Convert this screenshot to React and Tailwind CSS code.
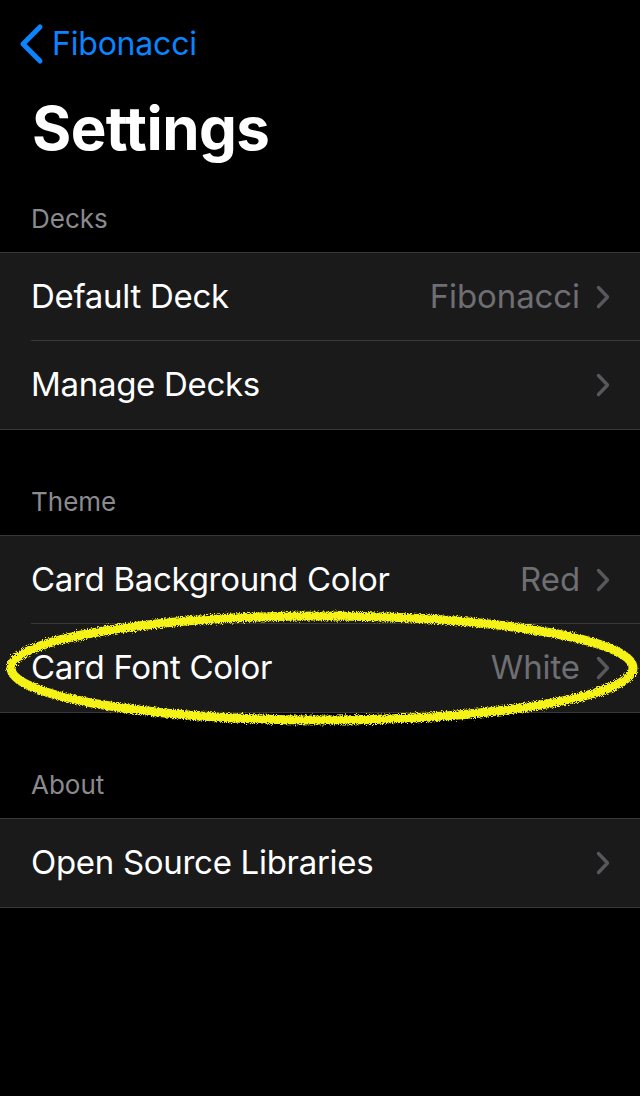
// one settings row inside a grouped list
function Row({ label, value, last }) {
  return (
    <div className="flex items-center h-[88px] pl-[31px]">
      <div
        className={
          "flex items-center h-full flex-1 pr-[30px] " +
          (last ? "" : "border-b border-[#38383a]")
        }
      >
        <span className="flex-1 text-[33px] text-white tracking-[-0.3px]">{label}</span>
        {value && (
          <span className="text-[33px] text-[#6e6e73] mr-[16px] tracking-[-0.1px]">{value}</span>
        )}
        <svg width="14" height="24" viewBox="0 0 14 24" fill="none">
          <path
            d="M2.5 2.5 L11.5 12 L2.5 21.5"
            stroke="#58585c"
            strokeWidth="3.4"
            strokeLinecap="round"
            strokeLinejoin="round"
          />
        </svg>
      </div>
    </div>
  );
}

function Section({ title, children }) {
  return (
    <div>
      <div className="px-[31px] pb-[20px] text-[26px] text-[#8a8a8f] leading-none">{title}</div>
      <div className="bg-[#1a1a1b] border-y border-[#38383a]">{children}</div>
    </div>
  );
}

export default function App() {
  return (
    <div
      className="relative w-[640px] h-[1096px] bg-black overflow-hidden"
      style={{ fontFamily: "Inter, 'Noto Sans', sans-serif" }}
    >
      {/* nav bar */}
      <div className="flex items-center h-[88px] pl-[18px]">
        <svg width="26" height="42" viewBox="0 0 26 42" fill="none">
          <path
            d="M22 4 L5 21 L22 38"
            stroke="#0a84ff"
            strokeWidth="5"
            strokeLinecap="round"
            strokeLinejoin="round"
          />
        </svg>
        <span className="ml-[8px] text-[32px] text-[#0a84ff] tracking-[-0.2px]">Fibonacci</span>
      </div>

      <h1 className="px-[32px] pt-[10px] h-[104px] text-[60px] font-bold text-white leading-none tracking-[-0.6px]">
        Settings
      </h1>

      <div className="pt-[14px] flex flex-col gap-[59px]">
        <Section title="Decks">
          <Row label="Default Deck" value="Fibonacci" />
          <Row label="Manage Decks" last />
        </Section>
        <Section title="Theme">
          <Row label="Card Background Color" value="Red" />
          <Row label="Card Font Color" value="White" last />
        </Section>
        <Section title="About">
          <Row label="Open Source Libraries" last />
        </Section>
      </div>

      {/* yellow highlight drawn over the screenshot */}
      <svg
        className="absolute left-0 top-[600px] pointer-events-none"
        width="640"
        height="140"
        viewBox="0 0 640 140"
      >
        <defs>
          <filter id="rough">
            <feTurbulence type="fractalNoise" baseFrequency="0.9" numOctaves="2" seed="3" />
            <feDisplacementMap in="SourceGraphic" scale="6" />
          </filter>
        </defs>
        <ellipse
          cx="322"
          cy="68"
          rx="311"
          ry="52"
          fill="none"
          stroke="#f4f213"
          strokeWidth="9"
          filter="url(#rough)"
        />
      </svg>
    </div>
  );
}
